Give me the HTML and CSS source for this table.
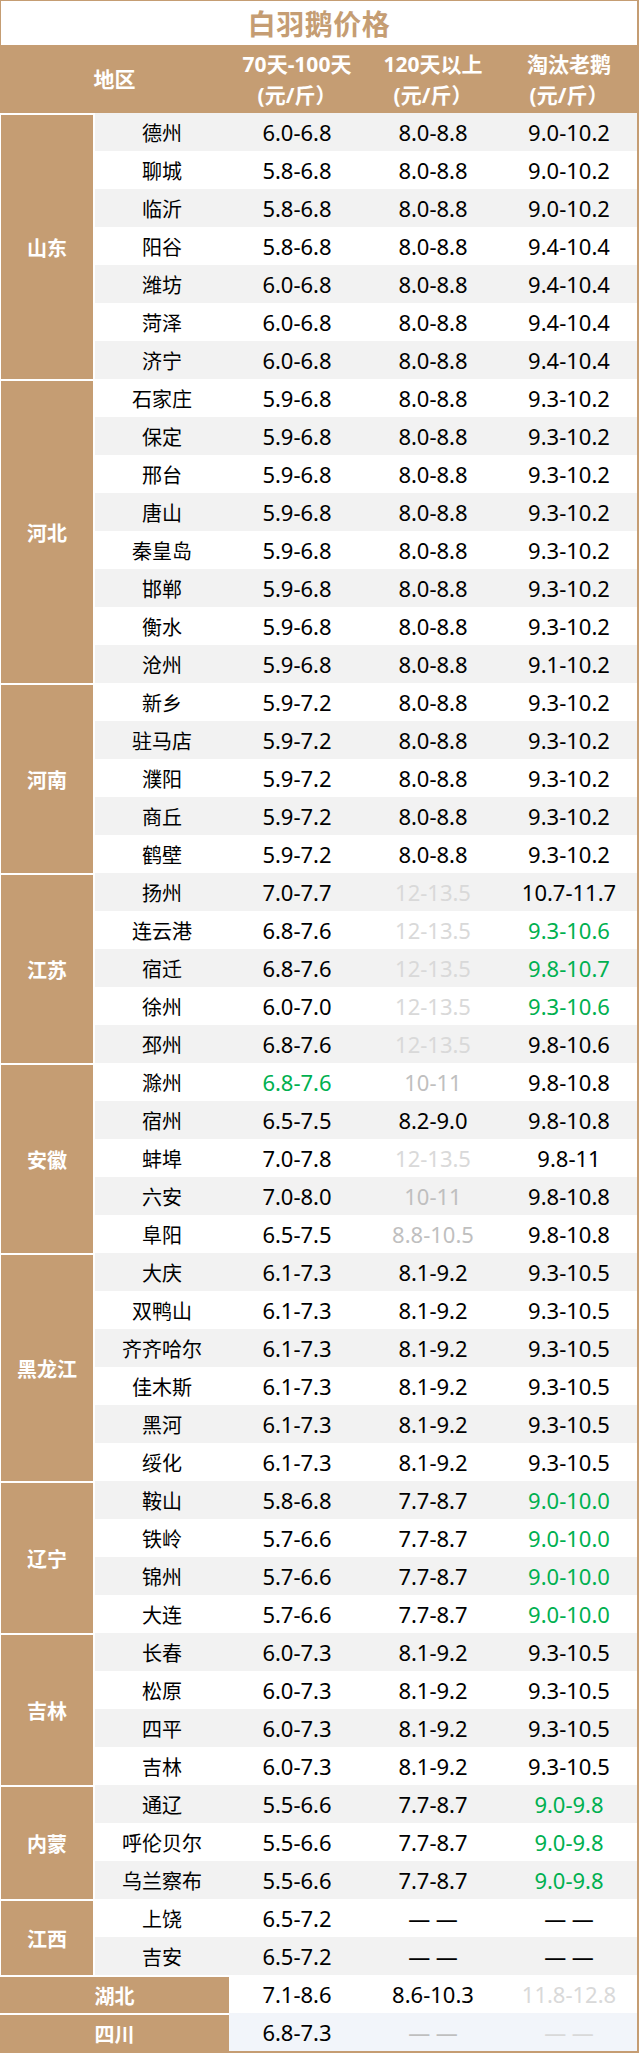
FILE: index.html
```html
<!DOCTYPE html>
<html lang="zh-CN">
<head>
<meta charset="utf-8">
<title>白羽鹅价格</title>
<link rel="stylesheet" href="styles.css">
</head>
<body>
<div class="sheet">
  <div class="title">白羽鹅价格</div>
  <div class="head">
    <div class="h-region">地区</div>
    <div class="h">70天-100天<br>(元/斤）</div>
    <div class="h">120天以上<br>(元/斤）</div>
    <div class="h">淘汰老鹅<br>(元/斤）</div>
  </div>

  <div class="group">
    <div class="prov">山东</div>
    <div class="rows">
      <div class="row g"><span>德州</span><span>6.0-6.8</span><span>8.0-8.8</span><span>9.0-10.2</span></div>
      <div class="row"><span>聊城</span><span>5.8-6.8</span><span>8.0-8.8</span><span>9.0-10.2</span></div>
      <div class="row g"><span>临沂</span><span>5.8-6.8</span><span>8.0-8.8</span><span>9.0-10.2</span></div>
      <div class="row"><span>阳谷</span><span>5.8-6.8</span><span>8.0-8.8</span><span>9.4-10.4</span></div>
      <div class="row g"><span>潍坊</span><span>6.0-6.8</span><span>8.0-8.8</span><span>9.4-10.4</span></div>
      <div class="row"><span>菏泽</span><span>6.0-6.8</span><span>8.0-8.8</span><span>9.4-10.4</span></div>
      <div class="row g"><span>济宁</span><span>6.0-6.8</span><span>8.0-8.8</span><span>9.4-10.4</span></div>
    </div>
  </div>

  <div class="group">
    <div class="prov">河北</div>
    <div class="rows">
      <div class="row"><span>石家庄</span><span>5.9-6.8</span><span>8.0-8.8</span><span>9.3-10.2</span></div>
      <div class="row g"><span>保定</span><span>5.9-6.8</span><span>8.0-8.8</span><span>9.3-10.2</span></div>
      <div class="row"><span>邢台</span><span>5.9-6.8</span><span>8.0-8.8</span><span>9.3-10.2</span></div>
      <div class="row g"><span>唐山</span><span>5.9-6.8</span><span>8.0-8.8</span><span>9.3-10.2</span></div>
      <div class="row"><span>秦皇岛</span><span>5.9-6.8</span><span>8.0-8.8</span><span>9.3-10.2</span></div>
      <div class="row g"><span>邯郸</span><span>5.9-6.8</span><span>8.0-8.8</span><span>9.3-10.2</span></div>
      <div class="row"><span>衡水</span><span>5.9-6.8</span><span>8.0-8.8</span><span>9.3-10.2</span></div>
      <div class="row g"><span>沧州</span><span>5.9-6.8</span><span>8.0-8.8</span><span>9.1-10.2</span></div>
    </div>
  </div>

  <div class="group">
    <div class="prov">河南</div>
    <div class="rows">
      <div class="row"><span>新乡</span><span>5.9-7.2</span><span>8.0-8.8</span><span>9.3-10.2</span></div>
      <div class="row g"><span>驻马店</span><span>5.9-7.2</span><span>8.0-8.8</span><span>9.3-10.2</span></div>
      <div class="row"><span>濮阳</span><span>5.9-7.2</span><span>8.0-8.8</span><span>9.3-10.2</span></div>
      <div class="row g"><span>商丘</span><span>5.9-7.2</span><span>8.0-8.8</span><span>9.3-10.2</span></div>
      <div class="row"><span>鹤壁</span><span>5.9-7.2</span><span>8.0-8.8</span><span>9.3-10.2</span></div>
    </div>
  </div>

  <div class="group">
    <div class="prov">江苏</div>
    <div class="rows">
      <div class="row g"><span>扬州</span><span>7.0-7.7</span><span class="lt">12-13.5</span><span>10.7-11.7</span></div>
      <div class="row"><span>连云港</span><span>6.8-7.6</span><span class="lt">12-13.5</span><span class="up">9.3-10.6</span></div>
      <div class="row g"><span>宿迁</span><span>6.8-7.6</span><span class="lt">12-13.5</span><span class="up">9.8-10.7</span></div>
      <div class="row"><span>徐州</span><span>6.0-7.0</span><span class="lt">12-13.5</span><span class="up">9.3-10.6</span></div>
      <div class="row g"><span>邳州</span><span>6.8-7.6</span><span class="lt">12-13.5</span><span>9.8-10.6</span></div>
    </div>
  </div>

  <div class="group">
    <div class="prov">安徽</div>
    <div class="rows">
      <div class="row"><span>滁州</span><span class="up">6.8-7.6</span><span class="md">10-11</span><span>9.8-10.8</span></div>
      <div class="row g"><span>宿州</span><span>6.5-7.5</span><span>8.2-9.0</span><span>9.8-10.8</span></div>
      <div class="row"><span>蚌埠</span><span>7.0-7.8</span><span class="lt">12-13.5</span><span>9.8-11</span></div>
      <div class="row g"><span>六安</span><span>7.0-8.0</span><span class="md">10-11</span><span>9.8-10.8</span></div>
      <div class="row"><span>阜阳</span><span>6.5-7.5</span><span class="md">8.8-10.5</span><span>9.8-10.8</span></div>
    </div>
  </div>

  <div class="group">
    <div class="prov">黑龙江</div>
    <div class="rows">
      <div class="row g"><span>大庆</span><span>6.1-7.3</span><span>8.1-9.2</span><span>9.3-10.5</span></div>
      <div class="row"><span>双鸭山</span><span>6.1-7.3</span><span>8.1-9.2</span><span>9.3-10.5</span></div>
      <div class="row g"><span>齐齐哈尔</span><span>6.1-7.3</span><span>8.1-9.2</span><span>9.3-10.5</span></div>
      <div class="row"><span>佳木斯</span><span>6.1-7.3</span><span>8.1-9.2</span><span>9.3-10.5</span></div>
      <div class="row g"><span>黑河</span><span>6.1-7.3</span><span>8.1-9.2</span><span>9.3-10.5</span></div>
      <div class="row"><span>绥化</span><span>6.1-7.3</span><span>8.1-9.2</span><span>9.3-10.5</span></div>
    </div>
  </div>

  <div class="group">
    <div class="prov">辽宁</div>
    <div class="rows">
      <div class="row g"><span>鞍山</span><span>5.8-6.8</span><span>7.7-8.7</span><span class="up">9.0-10.0</span></div>
      <div class="row"><span>铁岭</span><span>5.7-6.6</span><span>7.7-8.7</span><span class="up">9.0-10.0</span></div>
      <div class="row g"><span>锦州</span><span>5.7-6.6</span><span>7.7-8.7</span><span class="up">9.0-10.0</span></div>
      <div class="row"><span>大连</span><span>5.7-6.6</span><span>7.7-8.7</span><span class="up">9.0-10.0</span></div>
    </div>
  </div>

  <div class="group">
    <div class="prov">吉林</div>
    <div class="rows">
      <div class="row g"><span>长春</span><span>6.0-7.3</span><span>8.1-9.2</span><span>9.3-10.5</span></div>
      <div class="row"><span>松原</span><span>6.0-7.3</span><span>8.1-9.2</span><span>9.3-10.5</span></div>
      <div class="row g"><span>四平</span><span>6.0-7.3</span><span>8.1-9.2</span><span>9.3-10.5</span></div>
      <div class="row"><span>吉林</span><span>6.0-7.3</span><span>8.1-9.2</span><span>9.3-10.5</span></div>
    </div>
  </div>

  <div class="group">
    <div class="prov">内蒙</div>
    <div class="rows">
      <div class="row g"><span>通辽</span><span>5.5-6.6</span><span>7.7-8.7</span><span class="up">9.0-9.8</span></div>
      <div class="row"><span>呼伦贝尔</span><span>5.5-6.6</span><span>7.7-8.7</span><span class="up">9.0-9.8</span></div>
      <div class="row g"><span>乌兰察布</span><span>5.5-6.6</span><span>7.7-8.7</span><span class="up">9.0-9.8</span></div>
    </div>
  </div>

  <div class="group">
    <div class="prov">江西</div>
    <div class="rows">
      <div class="row"><span>上饶</span><span>6.5-7.2</span><span>— —</span><span>— —</span></div>
      <div class="row g"><span>吉安</span><span>6.5-7.2</span><span>— —</span><span>— —</span></div>
    </div>
  </div>

  <div class="single">
    <div class="prov wide">湖北</div>
    <span>7.1-8.6</span><span>8.6-10.3</span><span class="lt">11.8-12.8</span>
  </div>
  <div class="single b">
    <div class="prov wide">四川</div>
    <span>6.8-7.3</span><span class="md">— —</span><span class="lt">— —</span>
  </div>
</div>
</body>
</html>
```

FILE: styles.css
```css
html, body {
  margin: 0;
  padding: 0;
  background: #ffffff;
}

.sheet {
  width: 639px;
  box-sizing: border-box;
  background: #c59d73;
  padding: 1px 2px 2px 0;
  font-family: "Noto Sans", "Noto Sans CJK SC", sans-serif;
  color: #000000;
  font-size: 20px;
}

.title {
  height: 44px;
  margin-left: 1px;
  background: #ffffff;
  display: flex;
  align-items: center;
  justify-content: center;
  color: #c59d73;
  font-weight: 700;
  font-size: 28px;
  letter-spacing: 0.5px;
}

.head {
  height: 68px;
  display: grid;
  grid-template-columns: 229px 136px 136px 136px;
  color: #ffffff;
  font-weight: 700;
  font-size: 21px;
  line-height: 31px;
}

.h-region, .h {
  display: flex;
  align-items: center;
  justify-content: center;
  text-align: center;
}

.h {
  padding-top: 2px;
}

.group {
  display: grid;
  grid-template-columns: 95px 542px;
}

.prov {
  box-sizing: border-box;
  border-top: 2px solid #ffffff;
  border-right: 2px solid #ffffff;
  border-left: 1px solid #ffffff;
  background: #c59d73;
  color: #ffffff;
  font-weight: 700;
  display: flex;
  align-items: center;
  justify-content: center;
}

.row {
  height: 38px;
  display: grid;
  grid-template-columns: 134px 136px 136px 136px;
  background: #ffffff;
}

.row.g {
  background: #f2f2f2;
}

.row span, .single span {
  display: flex;
  align-items: center;
  justify-content: center;
  white-space: nowrap;
  font-size: 22px;
}

.row span:first-child {
  font-size: 20px;
}

.single {
  height: 38px;
  display: grid;
  grid-template-columns: 229px 136px 136px 136px;
  background: #ffffff;
}

.single.b {
  background: #f2f5fa;
}

.prov.wide {
  border-left: 0;
  border-right: 0;
}

.up {
  color: #00b050;
}

.lt {
  color: #d9d9d9;
}

.md {
  color: #bfbfbf;
}
```
